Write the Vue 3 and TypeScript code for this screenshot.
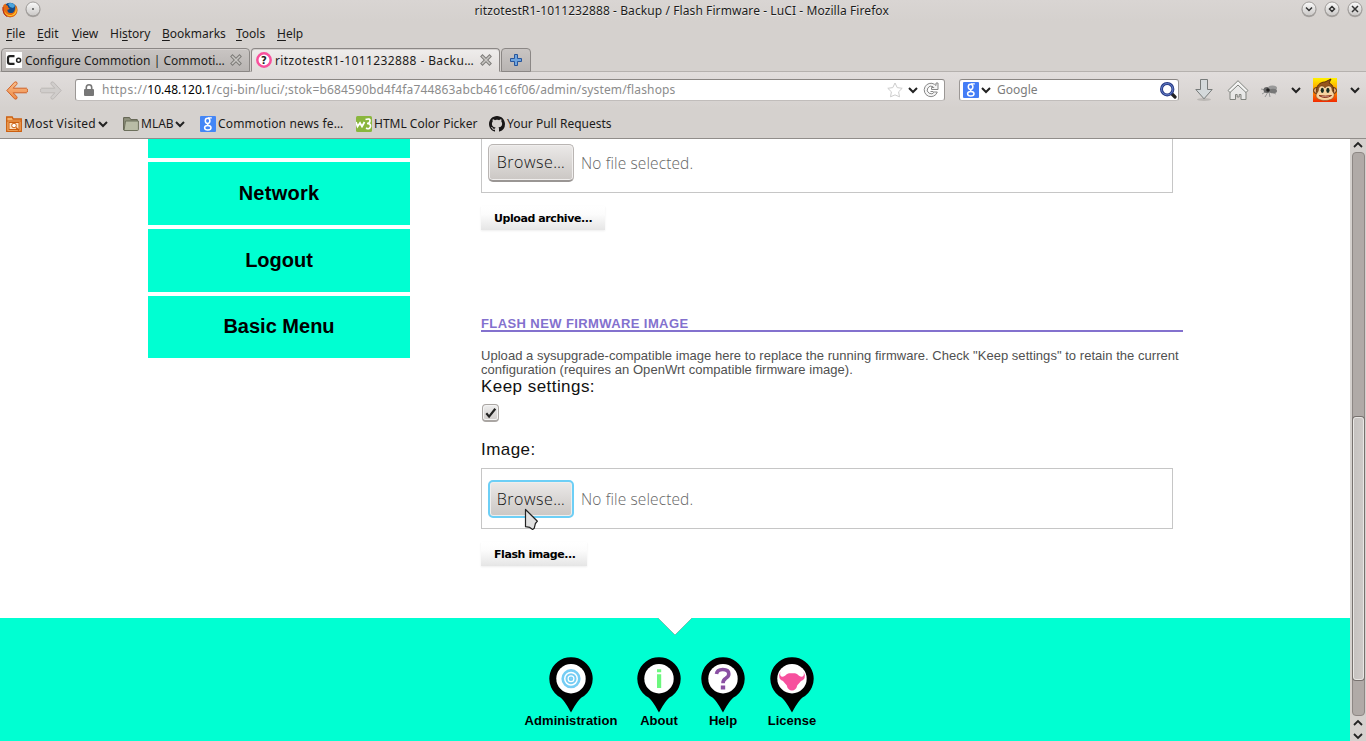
<script setup lang="ts">
interface Pin {
  label: string
  kind: 'target' | 'info' | 'help' | 'bull'
}

const menus: string[] = ['File', 'Edit', 'View', 'History', 'Bookmarks', 'Tools', 'Help']
const accelerators: number[] = [0, 0, 0, 2, 0, 0, 0]
const links: string[] = ['Network', 'Logout', 'Basic Menu']
const pins: Pin[] = [
  { label: 'Administration', kind: 'target' },
  { label: 'About', kind: 'info' },
  { label: 'Help', kind: 'help' },
  { label: 'License', kind: 'bull' },
]
</script>

<template>
  <div class="window">
    <header class="chrome">
      <div class="titlebar">
        <svg class="fox" width="16" height="16" viewBox="0 0 16 16">
          <circle cx="8" cy="8" r="7.200" fill="#164a86" />
          <path d="M6 2c2-2 6-1 7 2l-2 2-3-1z" fill="#4aa4dc" />
          <path d="M1.500 3C0 6 .5 12 4.500 14.300c4 2.200 9.500.5 10.700-4C16 7 15 4 13 2.500c.8 2 .6 4-.2 5.200-.5 2.300-2.500 3.700-4.500 3.300C6 10.700 5 9 5.600 7.600 6.400 7.800 7.500 7 7.500 6.300 6.300 6 5.700 5 6 4 4.500 3.600 3.700 2.500 3.500 1.500z" fill="#e66a12" />
          <path d="M13 4c1.500 3 .8 7-2.500 8.500C7 14 3.500 12 2.500 9 3 13.500 8 15.500 12 13c3-2 3.500-6 1-9z" fill="#ffc62a" />
          <path d="M1 5c-.5 4 1 8 4 9.500" fill="none" stroke="#b92a12" />
        </svg>
        <svg class="round" width="16" height="17" viewBox="0 0 16 17"><use href="#orb" /><circle cx="8" cy="8" r="1" fill="#555" /></svg>
        <div class="title"><span>ritzotestR1-1011232888 - Backup / Flash Firmware - LuCI - Mozilla Firefox</span></div>
        <svg class="round w" width="16" height="17" viewBox="0 0 16 17">
          <defs>
            <linearGradient id="orbfill" x1="0" y1="0" x2="0" y2="1">
              <stop offset="0" stop-color="#fafafa" /><stop offset="1" stop-color="#c9c7c5" />
            </linearGradient>
            <g id="orb">
              <circle cx="8" cy="9" r="7.300" fill="#8e8a87" opacity=".6" />
              <circle cx="8" cy="8" r="7" fill="url(#orbfill)" stroke="#8f8b89" stroke-width=".8" />
            </g>
          </defs>
          <use href="#orb" /><path d="M5 6.500l3 3 3-3" fill="none" stroke="#333" stroke-width="1.500" />
        </svg>
        <svg class="round w" width="16" height="17" viewBox="0 0 16 17"><use href="#orb" /><path d="M8 5.500L10.500 8 8 10.500 5.500 8z" fill="none" stroke="#333" stroke-width="1.500" /></svg>
        <svg class="round w" width="16" height="17" viewBox="0 0 16 17"><use href="#orb" /><path d="M5 5l6 6M11 5l-6 6" fill="none" stroke="#333" stroke-width="1.500" /></svg>
      </div>

      <nav class="menubar">
        <span v-for="(m, i) in menus" :key="m">{{ m.slice(0, accelerators[i]) }}<u>{{ m[accelerators[i]] }}</u>{{ m.slice(accelerators[i] + 1) }}</span>
      </nav>

      <div class="tabs">
        <div class="tab">
          <svg class="fav" width="16" height="16" viewBox="0 0 16 16">
            <rect width="16" height="16" fill="#fff" />
            <path d="M8.500 4.200H4Q2 4.200 2 6v4q0 1.900 2 1.900h4.500" fill="none" stroke="#222" stroke-width="2.200" />
            <circle cx="12.600" cy="8.200" r="2" fill="none" stroke="#222" stroke-width="1.500" />
          </svg>
          <span class="tabtext">Configure Commotion | Commoti…</span>
          <svg class="close" width="12" height="12" viewBox="0 0 12 12"><use href="#cross" /></svg>
        </div>
        <div class="tab active">
          <svg class="fav" width="16" height="16" viewBox="0 0 16 16">
            <circle cx="8" cy="8" r="6.700" fill="#fff" stroke="#f8509c" stroke-width="2.500" />
            <text x="8" y="11.500" class="qmark">?</text>
          </svg>
          <span class="tabtext two">ritzotestR1-1011232888 - Backu…</span>
          <svg class="close" width="12" height="12" viewBox="0 0 12 12">
            <g id="cross">
              <path d="M2.500 2.500l7 7M9.500 2.500l-7 7" stroke="#7d7b78" stroke-width="3.400" stroke-linecap="square" />
              <path d="M2.500 2.500l7 7M9.500 2.500l-7 7" stroke="#c9c7c4" stroke-width="1.500" stroke-linecap="square" />
            </g>
          </svg>
        </div>
        <div class="newtab">
          <svg width="12" height="12" viewBox="0 0 12 12"><path d="M4.500.5h3v4h4v3h-4v4h-3v-4h-4v-3h4z" fill="#6ea4de" stroke="#28559b" /></svg>
        </div>
      </div>

      <div class="navbar">
        <svg class="back" width="22" height="19" viewBox="0 0 22 19">
          <defs><linearGradient id="ember" x1="0" y1="0" x2="0" y2="1"><stop offset="0" stop-color="#f9bd8a" /><stop offset="1" stop-color="#ee8a45" /></linearGradient></defs>
          <path d="M.8 9.500L8.500 1.200q1.600-.9 2.500.4.400 1-.4 2L7.200 7.200h13.300q1 .3 1 2.300t-1 2.300H7.200l3.400 3.600q.8 1 .4 2-.9 1.300-2.500.4z" fill="url(#ember)" stroke="#cf6228" />
        </svg>
        <svg class="fwd" width="22" height="19" viewBox="0 0 22 19">
          <path d="M21.200 9.500L13.500 1.200q-1.600-.9-2.500.4-.4 1 .4 2l3.400 3.600H1.500q-1 .3-1 2.300t1 2.300h13.300l-3.400 3.600q-.8 1-.4 2 .9 1.300 2.500.4z" fill="#d0cdcb" stroke="#bcb8b6" />
        </svg>
        <div class="urlbar">
          <svg class="lock" width="10" height="12" viewBox="0 0 10 12"><path d="M2.300 6V3.500a2.700 2.700 0 015.400 0V6" fill="none" stroke="#777" stroke-width="1.600" /><rect y="5" width="10" height="7" rx="1" fill="#777" /></svg>
          <span class="url"><i class="u1">https://</i><b>10.48.120.1</b><i class="u2">/cgi-bin/luci/;stok=b684590bd4f4fa744863abcb461c6f06/admin/system/flashops</i></span>
          <svg class="star" width="16" height="16" viewBox="0 0 16 16"><path d="M8 1l2.200 4.600 5 .7-3.600 3.500.9 5L8 12.900 3.500 14.800l.9-5L.8 6.300l5-.7z" fill="#fff" stroke="#ccc" /></svg>
          <svg class="chev" width="10" height="7" viewBox="0 0 10 7"><path d="M1 1l4 4 4-4" fill="none" stroke="#222" stroke-width="2" /></svg>
          <svg class="reload" width="16" height="16" viewBox="0 0 16 16">
            <path d="M14.300 10A6.700 6.700 0 1111.500 2.300L13 3.500V1h2v6.500H8.500v-2h2.300l-.8-.8A3.800 3.800 0 1011.300 10z" fill="#f5f5f5" stroke="#888" />
            <path d="M7.500 9.500h3" stroke="#888" />
          </svg>
        </div>
        <div class="search">
          <svg class="gicon" width="16" height="16" viewBox="0 0 16 16"><rect width="16" height="16" rx="1" fill="#447df6" /><use href="#gee" /></svg>
          <svg class="chev s" width="10" height="7" viewBox="0 0 10 7"><path d="M1 1l4 4 4-4" fill="none" stroke="#222" stroke-width="2" /></svg>
          <span class="hint">Google</span>
          <svg class="mag" width="17" height="17" viewBox="0 0 17 17">
            <path d="M11.500 11.500l3.500 3.500" stroke="#222" stroke-width="3.200" stroke-linecap="round" />
            <circle cx="7.200" cy="7.200" r="5.700" fill="#fff" stroke="#283a86" stroke-width="3" />
            <circle cx="7.200" cy="7.200" r="5.700" fill="none" stroke="#6581c8" stroke-width="1" />
          </svg>
        </div>
        <svg class="down" width="20" height="24" viewBox="0 0 20 24">
          <ellipse cx="10" cy="21.500" rx="7" ry="1.500" fill="#bbb8b5" />
          <path d="M6.500 1.500h7v10h4.700L10 20.800 1.800 11.500h4.700z" fill="#d4d9db" stroke="#777b7a" />
        </svg>
        <svg class="home" width="22" height="22" viewBox="0 0 22 22">
          <path d="M3 12v8.500h5.500v-5h1.700v2.500h2v-2.500h1.800v5H19V12l-8-7z" fill="#e8e8e7" stroke="#80837e" />
          <path d="M1 11.500L11 1.700l10 9.800-2 2-8-7.500-8 7.500z" fill="#f4f4f3" stroke="#80837e" />
        </svg>
        <svg class="fly" width="17" height="14" viewBox="0 0 17 14">
          <path d="M0 5l5 1M1 10l5-3M4 13l3-5M15 10l-5-2M9 13L8 8" stroke="#999" />
          <ellipse cx="6" cy="6" rx="3.500" ry="3" fill="#666" />
          <ellipse cx="11.500" cy="4" rx="4.500" ry="2.500" fill="#999" />
          <ellipse cx="12" cy="7" rx="4" ry="2.200" fill="#777" /><circle cx="7" cy="6" r="1.800" fill="#222" />
        </svg>
        <svg class="chev f" width="10" height="7" viewBox="0 0 10 7"><path d="M1 1l4 4 4-4" fill="none" stroke="#222" stroke-width="2" /></svg>
        <svg class="monkey" width="24" height="24" viewBox="0 0 24 24">
          <defs><linearGradient id="fire" x1="0" y1="0" x2="0" y2="1"><stop offset="0" stop-color="#fff200" /><stop offset=".5" stop-color="#ff9900" /><stop offset="1" stop-color="#f22a00" /></linearGradient></defs>
          <rect width="24" height="24" fill="url(#fire)" />
          <circle cx="3.500" cy="12.500" r="3" fill="#e5a568" stroke="#572b0b" /><circle cx="20.500" cy="12.500" r="3" fill="#e5a568" stroke="#572b0b" />
          <path d="M4 15C2 8 7 4 12 4l6-3-2 4c5 2 5 7 4 12-2 6-13 7-16-2z" fill="#96551c" stroke="#572b0b" />
          <path d="M5.500 12c0-5 5-5 6.500-2 2-3 7-3 7 2 0 2 3 3 2 6-1 6-17 6-18 0 0-3 2.500-4 2.500-6z" fill="#f6d3a0" stroke="#572b0b" stroke-width=".4" />
          <ellipse cx="9.300" cy="12.300" rx="1.600" ry="2.600" fill="#152a20" /><ellipse cx="14.900" cy="12.300" rx="1.600" ry="2.600" fill="#152a20" />
          <path d="M6 17.500q6 4 12.500 0-6 1.300-12.500 0z" fill="#fff" stroke="#8a2c14" />
        </svg>
        <svg class="chev m" width="10" height="7" viewBox="0 0 10 7"><path d="M1 1l4 4 4-4" fill="none" stroke="#222" stroke-width="2" /></svg>
      </div>

      <div class="bookmarks">
        <div class="mark b1">
          <svg width="16" height="16" viewBox="0 0 16 16"><path d="M.7 15.300V1h5.500l1 2H15.300v12.300z" fill="#f6b26b" stroke="#cc5f10" stroke-width="1.300" /><path d="M.7 5h14.600" stroke="#cc5f10" /><rect x="3" y="6.500" width="10" height="7" fill="#fce3c4" stroke="#cc5f10" /><circle cx="8" cy="9.500" r="2.300" fill="#fff" stroke="#cc5f10" /><path d="M10 11.500l3 3" stroke="#cc5f10" stroke-width="1.500" /></svg>
          <span>Most Visited</span>
          <svg class="chev" width="10" height="7" viewBox="0 0 10 7"><path d="M1 1l4 4 4-4" fill="none" stroke="#222" stroke-width="2" /></svg>
        </div>
        <div class="mark b2">
          <svg width="16" height="16" viewBox="0 0 16 16"><path d="M.6 14V1.600h6l1.200 2h6.500V6" fill="#8f917d" stroke="#5f614f" /><path d="M1 14.500L2.500 5h12.900v8.500q0 1-1 1z" fill="#b9bca6" stroke="#6d705c" /></svg>
          <span>MLAB</span>
          <svg class="chev" width="10" height="7" viewBox="0 0 10 7"><path d="M1 1l4 4 4-4" fill="none" stroke="#222" stroke-width="2" /></svg>
        </div>
        <div class="mark b3">
          <svg width="16" height="16" viewBox="0 0 16 16">
            <rect width="16" height="16" rx="1" fill="#4486f6" />
            <g id="gee" fill="none" stroke="#fff">
              <ellipse cx="7.600" cy="4.800" rx="2.300" ry="2.600" stroke-width="1.500" />
              <path d="M8 1.800h3.800M8.300 7.500q-1.500.8 0 1.800" stroke-width="1.300" />
              <ellipse cx="7.800" cy="11.700" rx="3.200" ry="2.300" stroke-width="1.500" />
            </g>
          </svg>
          <span>Commotion news fe…</span>
        </div>
        <div class="mark b4">
          <svg width="16" height="16" viewBox="0 0 16 16"><rect width="16" height="16" rx="1.500" fill="#8ab63d" /><path d="M0 6l1.500 4.500L4 7l2 3.500L8.500 6" fill="none" stroke="#fff" stroke-width="1.800" /><path d="M9.500 3.500q5-1.500 4.500 1.500-.3 2.500-3 2.500 4 0 3.500 3-1 3.500-4.500 1.500" fill="none" stroke="#fff" stroke-width="1.700" /></svg>
          <span>HTML Color Picker</span>
        </div>
        <div class="mark b5">
          <svg width="16" height="16" viewBox="0 0 16 16"><path fill="#181616" fill-rule="evenodd" d="M8 0C3.580 0 0 3.580 0 8c0 3.540 2.290 6.530 5.470 7.590.4.070.55-.17.55-.38 0-.19-.01-.82-.01-1.490-2.010.37-2.530-.49-2.690-.94-.09-.23-.48-.94-.82-1.130-.28-.15-.68-.52-.01-.53.63-.01 1.080.58 1.230.82.72 1.210 1.870.87 2.330.66.070-.52.280-.87.510-1.070-1.780-.2-3.640-.89-3.640-3.950 0-.87.310-1.590.82-2.150-.08-.2-.36-1.020.08-2.120 0 0 .67-.21 2.200.82.640-.18 1.320-.27 2-.27.680 0 1.360.09 2 .27 1.530-1.040 2.200-.82 2.200-.82.440 1.100.160 1.920.080 2.120.510.560.820 1.270.820 2.150 0 3.070-1.870 3.750-3.650 3.950.290.250.540.730.540 1.480 0 1.070-.01 1.930-.01 2.200 0 .210.150.460.550.380A8.010 8.010 0 0016 8c0-4.420-3.580-8-8-8z" /></svg>
          <span>Your Pull Requests</span>
        </div>
      </div>
    </header>

    <div class="viewport">
      <div class="page">
        <div class="columns">
          <aside>
            <div class="link partial"></div>
            <a v-for="l in links" :key="l" class="link">{{ l }}</a>
          </aside>
          <main>
            <div class="filebox clipped">
              <button class="browse">Browse…</button><span class="nofile">No file selected.</span>
            </div>
            <button class="action upload">Upload archive...</button>
            <h3>FLASH NEW FIRMWARE IMAGE</h3>
            <p class="l1">Upload a sysupgrade-compatible image here to replace the running firmware. Check "Keep settings" to retain the current</p>
            <p class="l2">configuration (requires an OpenWrt compatible firmware image).</p>
            <label class="keep">Keep settings:</label>
            <div class="check">
              <svg width="18" height="18" viewBox="0 0 18 18"><path d="M4.300 9.300l2.800 3.300 6.200-7.800" fill="none" stroke="#222" stroke-width="2.200" /></svg>
            </div>
            <label class="image">Image:</label>
            <div class="filebox">
              <button class="browse focus">Browse…</button><span class="nofile">No file selected.</span>
              <svg class="pointer" width="15" height="23" viewBox="0 0 15 23">
                <path d="M1.500 1.500v17.200l4.300.7 2.800 2.100 1.600-1.200 1.200-4.800 2-2.300z" fill="#e2e2e2" stroke="#222" stroke-width="1.200" stroke-linejoin="round" />
              </svg>
            </div>
            <button class="action flash">Flash image...</button>
          </main>
        </div>
        <footer>
          <svg class="notch" width="36" height="18" viewBox="0 0 36 18"><path d="M1 0l17 17L35 0z" fill="#fff" /><path d="M1 0l17 17L35 0" fill="none" stroke="#6a9b8d" stroke-width=".6" /></svg>
          <div v-for="p in pins" :key="p.label" class="pin" :class="p.kind">
            <svg width="44" height="56" viewBox="0 0 44 56">
              <path d="M22 .3a21.400 21.400 0 0110.500 40.200C29 43 25 50 22 55.500 19 50 15 43 11.500 40.500A21.400 21.400 0 0122 .3z" fill="#000" />
              <circle cx="22" cy="21.700" r="14.700" fill="#fff" />
              <g v-if="p.kind === 'target'" fill="none" stroke="#76cdf4" stroke-width="2.600"><circle cx="22" cy="21.700" r="8.300" /><circle cx="22" cy="21.700" r="4.500" stroke-width="2" /><circle cx="22" cy="21.700" r="1.300" stroke-width="2" /></g>
              <path v-else-if="p.kind === 'info'" d="M20 12.200h4.200v3H20zM20 17.300h4.200v13.700H20z" fill="#6cf77e" />
              <g v-else-if="p.kind === 'help'"><path d="M15.500 17q.5-4.500 6.300-4.500 6 0 6 4.500 0 2.500-3 4.300-2.900 1.600-2.800 5" fill="none" stroke="#8a4fa3" stroke-width="3.600" /><rect x="19.800" y="28.500" width="4.400" height="4" fill="#8a4fa3" /></g>
              <path v-else d="M10.500 14.800q-.9 2.500 0 4 1.500 2 4.500 0 2-2.500 4-2.600h6q2 .1 4 2.600 3 2 4.500 0 .9-1.500 0-4 2.300 3.300 1 6.500-1.200 2-3.500 2.700-2 2.500-3.700 4.300-.5 2.700-2.100 3.900-1.200 1.400-3.200 1.400t-3.200-1.400q-1.600-1.200-2.100-3.900-1.700-1.800-3.700-4.300-2.300-.7-3.500-2.700-1.300-3.200 1-6.500z" fill="#f7509e" />
            </svg>
            <span>{{ p.label }}</span>
          </div>
        </footer>
      </div>
      <div class="scroll">
        <svg class="arrow" width="10" height="8" viewBox="0 0 10 8"><path d="M1 6l4-4 4 4" fill="none" stroke="#222" stroke-width="1.800" /></svg>
        <div class="groove"><div class="thumb"></div></div>
        <svg class="arrow up2" width="10" height="8" viewBox="0 0 10 8"><path d="M1 6l4-4 4 4" fill="none" stroke="#222" stroke-width="1.800" /></svg>
        <svg class="arrow dn" width="10" height="8" viewBox="0 0 10 8"><path d="M1 2l4 4 4-4" fill="none" stroke="#222" stroke-width="1.800" /></svg>
      </div>
    </div>
  </div>
</template>

<style>
body { margin: 0; overflow: hidden; }
</style>

<style scoped>
* { box-sizing: border-box; }
svg { display: block; flex: none; }
.window { width: 1366px; height: 741px; display: flex; flex-direction: column; overflow: hidden; background: #fff; font-family: "Liberation Sans", sans-serif; }
.chrome { height: 139px; flex: none; background: #d5d1ce; border-bottom: 1px solid #918d8a; font: 12px/16px "Noto Sans", sans-serif; color: #1c1b1a; white-space: nowrap; }
.titlebar { height: 21px; display: flex; padding: 1px 3px 0 2px; background: linear-gradient(#d9d5d3, #d5d1ce); }
.fox { margin: 1px 6px 0 0; }
.round { margin: 0 0 0 .5px; }
.round.w { margin-left: 7px; }
.title { flex: 1; text-align: center; padding-left: 29px; line-height: 20px; text-shadow: 0 1px 0 #eee; letter-spacing: .09px; }
.menubar { height: 27px; display: grid; grid-template-columns: 31px 35px 38px 52px 74px 41px 60px; padding: 5px 0 0 6px; }
.menubar u { text-underline-offset: 2px; }
.tabs { height: 24px; display: flex; padding-left: 1px; border-bottom: 1px solid #b5b1ae; }
.tab { width: 249px; height: 24px; margin-right: 1px; display: flex; align-items: center; border: 1px solid #8b8785; border-radius: 4px 4px 0 0; padding: 0 0 0 4px; background: linear-gradient(#c9c5c3, #b8b4b2); box-shadow: inset 0 1px 0 #d4d0ce; }
.tab.active { background: linear-gradient(#efedec, #e1dddb); border-bottom-color: #e1dddb; }
.tabtext { width: 202px; margin-left: 3px; padding-top: 1px; }
.tabtext.two { letter-spacing: .39px; }
.close { margin-left: 3px; }
.qmark { font: bold 10px "DejaVu Sans", sans-serif; text-anchor: middle; fill: #222; }
.newtab { width: 30px; height: 24px; border: 1px solid #8b8785; border-radius: 4px 4px 0 0; background: linear-gradient(#c9c5c3, #b8b4b2); padding: 5px 0 0 8px; }
.navbar { height: 36px; display: flex; align-items: flex-start; padding: 7px 0 0 6px; background: linear-gradient(#e1dddc, #d5d1ce); }
.back { margin-top: 2px; }
.fwd { margin: 2px 13px 0 12px; }
.urlbar, .search { height: 22px; border: 1px solid #9b9795; border-top: 1.5px solid #8a8683; border-bottom-color: #c1bdbb; border-radius: 3px; background: #fff; display: flex; align-items: center; }
.urlbar { width: 870px; padding-left: 8px; }
.url { width: 785px; margin-left: 8px; color: #000; display: flex; }
.url i { font-style: normal; color: #8c8c8c; }
.url b { font-weight: normal; }
.u1 { letter-spacing: .5px; }
.u2 { letter-spacing: .145px; }
.chev { margin-left: 5px; }
.reload { margin-left: 5px; }
.search { width: 220px; margin-left: 14px; padding-left: 3px; }
.chev.s { margin-left: 2px; }
.hint { width: 158px; margin-left: 6px; color: #7c7c7c; }
.mag { margin-left: 5px; }
.down { margin: -1px 0 0 15px; }
.home { margin: 0 0 0 13px; }
.fly { margin: 5px 0 0 12px; }
.chev.f { margin: 8px 0 0 13px; }
.monkey { margin: -1px 0 0 12px; }
.chev.m { margin: 8px 0 0 13px; }
.bookmarks { height: 30px; display: flex; padding: 8px 0 0 6px; }
.mark { display: flex; align-items: center; height: 16px; }
.mark span { margin-left: 2px; }
.mark .chev { margin-left: auto; }
.b1 { width: 102px; margin-right: 15px; }
.b1 span { letter-spacing: .25px; }
.b2 { width: 62px; margin-right: 15px; }
.b3 { width: 156px; }
.b3 span { letter-spacing: .17px; }
.b4 { width: 133px; }

.viewport { flex: 1; display: flex; min-height: 0; }
.page { width: 1350px; display: flex; flex-direction: column; }
.columns { height: 479px; display: flex; padding-left: 148px; }
aside { width: 262px; display: flex; flex-direction: column; gap: 4px; }
.link { height: 63px; background: #00ffd2; color: #000; font: bold 20px/62px "Liberation Sans", sans-serif; text-align: center; }
.link:nth-child(2) { letter-spacing: .25px; }
.link:last-child { height: 62px; line-height: 61px; }
.partial { height: 19px; }
main { width: 702px; margin-left: 71px; display: flex; flex-direction: column; align-items: flex-start; }
.filebox { position: relative; width: 692px; height: 61px; border: 1px solid #c6c6c6; display: flex; padding: 11px 0 0 6px; }
.filebox.clipped { height: 54px; border-top: 0; padding-top: 5px; }
.browse { width: 86px; height: 38px; padding: 0; border: 1px solid #b9b5b3; border-bottom: 2px solid #9a9694; border-radius: 5px; background: linear-gradient(#ebe9e8, #cbc7c4); box-shadow: inset 0 0 0 1px #f0eeed; font: 300 16px/35px "Open Sans", sans-serif; letter-spacing: .5px; color: #111; }
.browse.focus { border: 2px solid #6dcff6; box-shadow: inset 0 0 0 1px #f0eeed; }
.nofile { margin-left: 7px; font: 300 15.500px/38px "Open Sans", sans-serif; letter-spacing: .12px; color: #666; }
.pointer { position: absolute; left: 42px; top: 39px; }
.action { height: 24px; border: 0; padding: 1px 0 0 13px; text-align: left; background: linear-gradient(#fff, #fcfcfc 35%, #e5e5e5); box-shadow: 0 1px 2px #eee; font: bold 11px/23px "DejaVu Sans", sans-serif; letter-spacing: -.42px; color: #000; white-space: nowrap; }
.upload { width: 124px; margin-top: 13px; }
.flash { width: 106px; margin-top: 13px; }
h3 { margin: 85px 0 0; width: 702px; height: 17px; border-bottom: 2px solid #8371ce; font: bold 13px/18px "Liberation Sans", sans-serif; letter-spacing: .4px; color: #8371ce; }
p { margin: 0; font: 13px/14px "Liberation Sans", sans-serif; letter-spacing: .035px; color: #505050; white-space: nowrap; }
.l1 { margin-top: 17px; }
label { font: 17px/20px "Liberation Sans", sans-serif; color: #111; letter-spacing: .45px; }
.check { width: 17px; height: 18px; margin: 7px 0 0 1px; border: 1px solid #aaa6a3; border-bottom-width: 2px; border-radius: 4px; background: linear-gradient(#eee, #d1cdcb); box-shadow: inset 0 0 0 1px #f4f4f4; }
.check svg { margin: -1px; }
.image { margin: 18px 0 8px; }

footer { position: relative; height: 123px; background: #00ffd2; display: flex; padding: 39px 0 0 518px; }
.notch { position: absolute; left: 657px; top: 0; }
.pin { display: flex; flex-direction: column; align-items: center; font: bold 13px/16px "Liberation Sans", sans-serif; color: #000; }
.target { width: 106px; letter-spacing: .1px; }
.info { width: 70px; }
.help { width: 58px; }
.bull { width: 80px; }

.scroll { width: 16px; background: #d5d1ce; display: flex; flex-direction: column; align-items: center; }
.arrow { margin-top: 2px; }
.groove { width: 13px; height: 564px; margin: 3px 0 3px; border: 1px solid #8d8784; border-radius: 4px; background: #b0aaa7; padding-top: 264px; }
.thumb { height: 263px; border: 1px solid #e9e7e5; border-radius: 3px; background: linear-gradient(90deg, #c6c2c0, #cecac8); box-shadow: 0 0 0 1px #77716e; }
.up2 { margin-top: 0; }
.dn { margin-top: 5px; }
</style>
